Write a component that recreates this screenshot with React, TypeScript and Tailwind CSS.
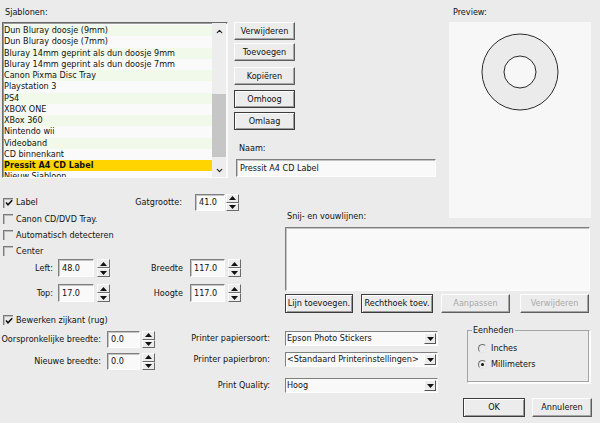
import type { ReactNode } from 'react'
import clsx from 'clsx'
import { ChevronUp, ChevronDown } from 'lucide-react'

const templates = [
  'Dun Bluray doosje (9mm)',
  'Dun Bluray doosje (7mm)',
  'Bluray 14mm geprint als dun doosje 9mm',
  'Bluray 14mm geprint als dun doosje 7mm',
  'Canon Pixma Disc Tray',
  'Playstation 3',
  'PS4',
  'XBOX ONE',
  'XBox 360',
  'Nintendo wii',
  'Videoband',
  'CD binnenkant',
  'Pressit A4 CD Label',
  'Nieuw Sjabloon',
]

const selected = 'Pressit A4 CD Label'

// classic raised push button
function Btn({ children, className, strong, disabled }: { children: ReactNode; className?: string; strong?: boolean; disabled?: boolean }) {
  return (
    <div
      className={clsx(
        'flex items-center justify-center bg-[#ececec] border',
        strong
          ? 'border-[#3c3c3c] shadow-[inset_1px_1px_0_#ffffff,inset_-1px_-1px_0_#9a9a9a]'
          : 'border-t-[#fdfdfd] border-l-[#fdfdfd] border-r-[#5e5e5e] border-b-[#5e5e5e] shadow-[inset_-1px_-1px_0_#a6a6a6]',
        disabled && 'text-[#a9a9a9]',
        className,
      )}
    >
      {children}
    </div>
  )
}

function Field({ value, className }: { value: string; className?: string }) {
  return (
    <div
      className={clsx(
        'flex items-center pl-[3px] bg-[#f9f9f9] border border-t-[#7f7f7f] border-l-[#7f7f7f] border-r-[#fdfdfd] border-b-[#fdfdfd] shadow-[inset_1px_1px_0_#c4c4c4]',
        className,
      )}
    >
      {value}
    </div>
  )
}

function Tri({ down }: { down?: boolean }) {
  return (
    <svg width="7" height="4" viewBox="0 0 7 4">
      <path d={down ? 'M0 0 H7 L3.5 4 Z' : 'M0 4 H7 L3.5 0 Z'} fill="#111" />
    </svg>
  )
}

function Spin({ className }: { className?: string }) {
  return (
    <div className={clsx('flex flex-col h-full w-[13px]', className)}>
      <div className="flex-1 flex items-center justify-center bg-[#ececec] border border-t-[#fdfdfd] border-l-[#fdfdfd] border-r-[#6a6a6a] border-b-[#6a6a6a]">
        <Tri />
      </div>
      <div className="flex-1 flex items-center justify-center bg-[#ececec] border border-t-[#fdfdfd] border-l-[#fdfdfd] border-r-[#6a6a6a] border-b-[#6a6a6a]">
        <Tri down />
      </div>
    </div>
  )
}

function Check({ label, checked, className }: { label: string; checked?: boolean; className?: string }) {
  return (
    <div className={clsx('flex items-center', className)}>
      <div className="w-[10px] h-[10px] border-t border-l border-[#7a7a7a] shadow-[inset_1px_1px_0_#bdbdbd] flex items-center justify-center">
        {checked && (
          <svg width="8" height="8" viewBox="0 0 8 8">
            <path d="M1 3.5 L3 5.8 L7.2 1.2" stroke="#111" strokeWidth="1.6" fill="none" />
          </svg>
        )}
      </div>
      <span className="ml-[3px]">{label}</span>
    </div>
  )
}

function Radio({ label, checked, className }: { label: string; checked?: boolean; className?: string }) {
  return (
    <div className={clsx('flex items-center h-[12px]', className)}>
      <div className="w-[9px] h-[9px] rounded-full border border-t-[#6f6f6f] border-l-[#6f6f6f] border-r-[#e6e6e6] border-b-[#e6e6e6] flex items-center justify-center">
        {checked && <div className="w-[3px] h-[3px] rounded-full bg-[#111]" />}
      </div>
      <span className="ml-[4px]">{label}</span>
    </div>
  )
}

function Select({ value, className }: { value: string; className?: string }) {
  return (
    <div
      className={clsx(
        'flex items-center bg-[#f9f9f9] border border-t-[#7f7f7f] border-l-[#7f7f7f] border-r-[#fdfdfd] border-b-[#fdfdfd]',
        className,
      )}
    >
      <span className="flex-1 pl-[1px] truncate">{value}</span>
      <div className="w-[12px] h-[11px] mr-[1px] flex items-center justify-center bg-[#ececec] border border-t-[#fdfdfd] border-l-[#fdfdfd] border-r-[#555] border-b-[#555]">
        <Tri down />
      </div>
    </div>
  )
}

export default function App() {
  return (
    <div className="w-[600px] h-[423px] overflow-hidden bg-[#ebebeb] text-[#111] text-[9px] leading-none font-['DejaVu_Sans_Condensed','Liberation_Sans',sans-serif]">
      {/* top: template list, buttons, name, preview */}
      <div className="flex items-start h-[178px]">
        <div className="ml-[2px] w-[226px]">
          <div className="h-[22px] flex items-center pt-[2px] pl-[3px]">Sjablonen:</div>
          <div className="h-[156px] flex border border-t-[#6a6a6a] border-l-[#6a6a6a] border-r-[#fafafa] border-b-[#fafafa] shadow-[inset_1px_1px_0_#9a9a9a] bg-[#fafafa]">
            <div className="flex-1 overflow-hidden pt-[2px] pl-[1px]">
              {templates.map((t, i) => (
                <div
                  key={t}
                  className={clsx(
                    'h-[11.25px] flex items-center whitespace-nowrap',
                    t === selected ? 'bg-[#ffd400] font-bold' : i % 2 === 0 ? 'bg-[#f1faea]' : 'bg-[#fafafa]',
                  )}
                >
                  {t}
                </div>
              ))}
            </div>
            <div className="w-[14px] flex flex-col bg-[#ededed] mr-[1px]">
              <div className="h-[14px] mt-[1px] flex items-center justify-center">
                <ChevronUp size={9} strokeWidth={3} color="#222" />
              </div>
              <div className="h-[56px]" />
              <div className="h-[63px] bg-[#c6c6c6]" />
              <div className="flex-1" />
              <div className="h-[14px] flex items-center justify-center">
                <ChevronDown size={9} strokeWidth={3} color="#222" />
              </div>
            </div>
          </div>
        </div>

        <div className="ml-[6px] w-[202px] pt-[22px]">
          <Btn className="w-[61px] h-[18px]">Verwijderen</Btn>
          <Btn className="w-[61px] h-[18px] mt-[3px]">Toevoegen</Btn>
          <Btn className="w-[61px] h-[18px] mt-[6px]">Kopiëren</Btn>
          <Btn strong className="w-[61px] h-[18px] mt-[5px]">Omhoog</Btn>
          <Btn strong className="w-[61px] h-[18px] mt-[4px]">Omlaag</Btn>
          <div className="h-[12px] mt-[12px] pl-[5px] flex items-center">Naam:</div>
          <Field value="Pressit A4 CD Label" className="ml-[2px] w-[200px] h-[18px] mt-[5px]" />
        </div>

        <div className="ml-[13px] w-[142px]">
          <div className="h-[22px] flex items-center pt-[2px] pl-[4px]">Preview:</div>
          <div className="h-[196px] bg-[#f7f7f7]">
            <svg width="142" height="100" viewBox="0 0 142 100">
              <circle cx="71" cy="50" r="38" fill="#ebebeb" stroke="#2b2b2b" strokeWidth="1" />
              <circle cx="71" cy="50" r="16" fill="#f7f7f7" stroke="#2b2b2b" strokeWidth="1" />
            </svg>
          </div>
        </div>
      </div>

      {/* middle: options and cut lines */}
      <div className="flex h-[135px]">
        <div className="w-[245px] pt-[16px]">
          <div className="h-[17px] flex items-center">
            <Check label="Label" checked className="w-[130px] pl-[3px]" />
            <span className="w-[52px] text-right">Gatgrootte:</span>
            <Field value="41.0" className="ml-[13px] w-[30px] h-full" />
            <Spin className="ml-[1px]" />
          </div>
          <div className="h-[16px] flex items-center">
            <Check label="Canon CD/DVD Tray." className="pl-[3px]" />
          </div>
          <div className="h-[16px] flex items-center">
            <Check label="Automatisch detecteren" className="pl-[3px]" />
          </div>
          <div className="h-[16px] flex items-center">
            <Check label="Center" className="pl-[3px]" />
          </div>
          <div className="h-[18px] flex items-center">
            <span className="w-[53px] text-right">Left:</span>
            <Field value="48.0" className="ml-[5px] w-[36px] h-full" />
            <Spin className="ml-[3px]" />
            <span className="w-[73px] text-right">Breedte</span>
            <Field value="117.0" className="ml-[7px] w-[35px] h-full" />
            <Spin className="ml-[3px]" />
          </div>
          <div className="h-[18px] mt-[7px] flex items-center">
            <span className="w-[53px] text-right">Top:</span>
            <Field value="17.0" className="ml-[5px] w-[36px] h-full" />
            <Spin className="ml-[3px]" />
            <span className="w-[73px] text-right">Hoogte</span>
            <Field value="117.0" className="ml-[7px] w-[35px] h-full" />
            <Spin className="ml-[3px]" />
          </div>
        </div>

        <div className="ml-[40px] w-[305px] pt-[32px]">
          <div className="h-[12px] pl-[2px] flex items-center">Snij- en vouwlijnen:</div>
          <div className="h-[64px] mt-[5px] bg-[#f9f9f9] border border-t-[#7f7f7f] border-l-[#7f7f7f] border-r-[#fdfdfd] border-b-[#fdfdfd] shadow-[inset_1px_1px_0_#c4c4c4]" />
          <div className="flex h-[19px] mt-[3px]">
            <Btn strong className="w-[68px]">Lijn toevoegen.</Btn>
            <Btn strong className="w-[72px] ml-[8px]">Rechthoek toev.</Btn>
            <Btn disabled className="w-[69px] ml-[8px]">Aanpassen</Btn>
            <Btn disabled className="w-[69px] ml-[10px]">Verwijderen</Btn>
          </div>
        </div>
      </div>

      {/* bottom: spine, printer settings, units */}
      <div className="flex h-[110px]">
        <div className="w-[160px]">
          <div className="h-[12px] mt-[1px] flex items-center">
            <Check label="Bewerken zijkant (rug)" checked className="pl-[3px]" />
          </div>
          <div className="h-[17px] mt-[5px] flex items-center">
            <span className="w-[101px] text-right">Oorspronkelijke breedte:</span>
            <Field value="0.0" className="ml-[6px] w-[33px] h-full" />
            <Spin className="ml-[2px]" />
          </div>
          <div className="h-[17px] mt-[5px] flex items-center">
            <span className="w-[101px] text-right">Nieuwe breedte:</span>
            <Field value="0.0" className="ml-[6px] w-[33px] h-full" />
            <Spin className="ml-[2px]" />
          </div>
        </div>

        <div className="w-[278px] pt-[18px]">
          <div className="h-[15px] flex items-center">
            <span className="w-[110px] text-right">Printer papiersoort:</span>
            <Select value="Epson Photo Stickers" className="ml-[15px] w-[153px] h-full" />
          </div>
          <div className="h-[15px] mt-[6px] flex items-center">
            <span className="w-[110px] text-right">Printer papierbron:</span>
            <Select value="<Standaard Printerinstellingen>" className="ml-[15px] w-[153px] h-full" />
          </div>
          <div className="h-[15px] mt-[11px] flex items-center">
            <span className="w-[110px] text-right">Print Quality:</span>
            <Select value="Hoog" className="ml-[15px] w-[153px] h-full" />
          </div>
        </div>

        <div className="ml-[25px] w-[129px] pt-[17px]">
          <div className="relative ml-[4px] w-[123px] h-[53px] border border-t-[#a3a3a3] border-l-[#a3a3a3] border-r-[#fdfdfd] border-b-[#fdfdfd] shadow-[inset_-1px_-1px_0_#a3a3a3,1px_1px_0_#fdfdfd] pt-[11px] pl-[10px]">
            <span className="absolute left-[4px] top-[-5px] px-[1px] bg-[#ebebeb]">Eenheden</span>
            <Radio label="Inches" />
            <Radio label="Millimeters" checked className="mt-[4px]" />
          </div>
          <div className="flex h-[19px] mt-[15px]">
            <Btn strong className="w-[62px]">OK</Btn>
            <Btn className="w-[60px] ml-[7px]">Annuleren</Btn>
          </div>
        </div>
      </div>
    </div>
  )
}
